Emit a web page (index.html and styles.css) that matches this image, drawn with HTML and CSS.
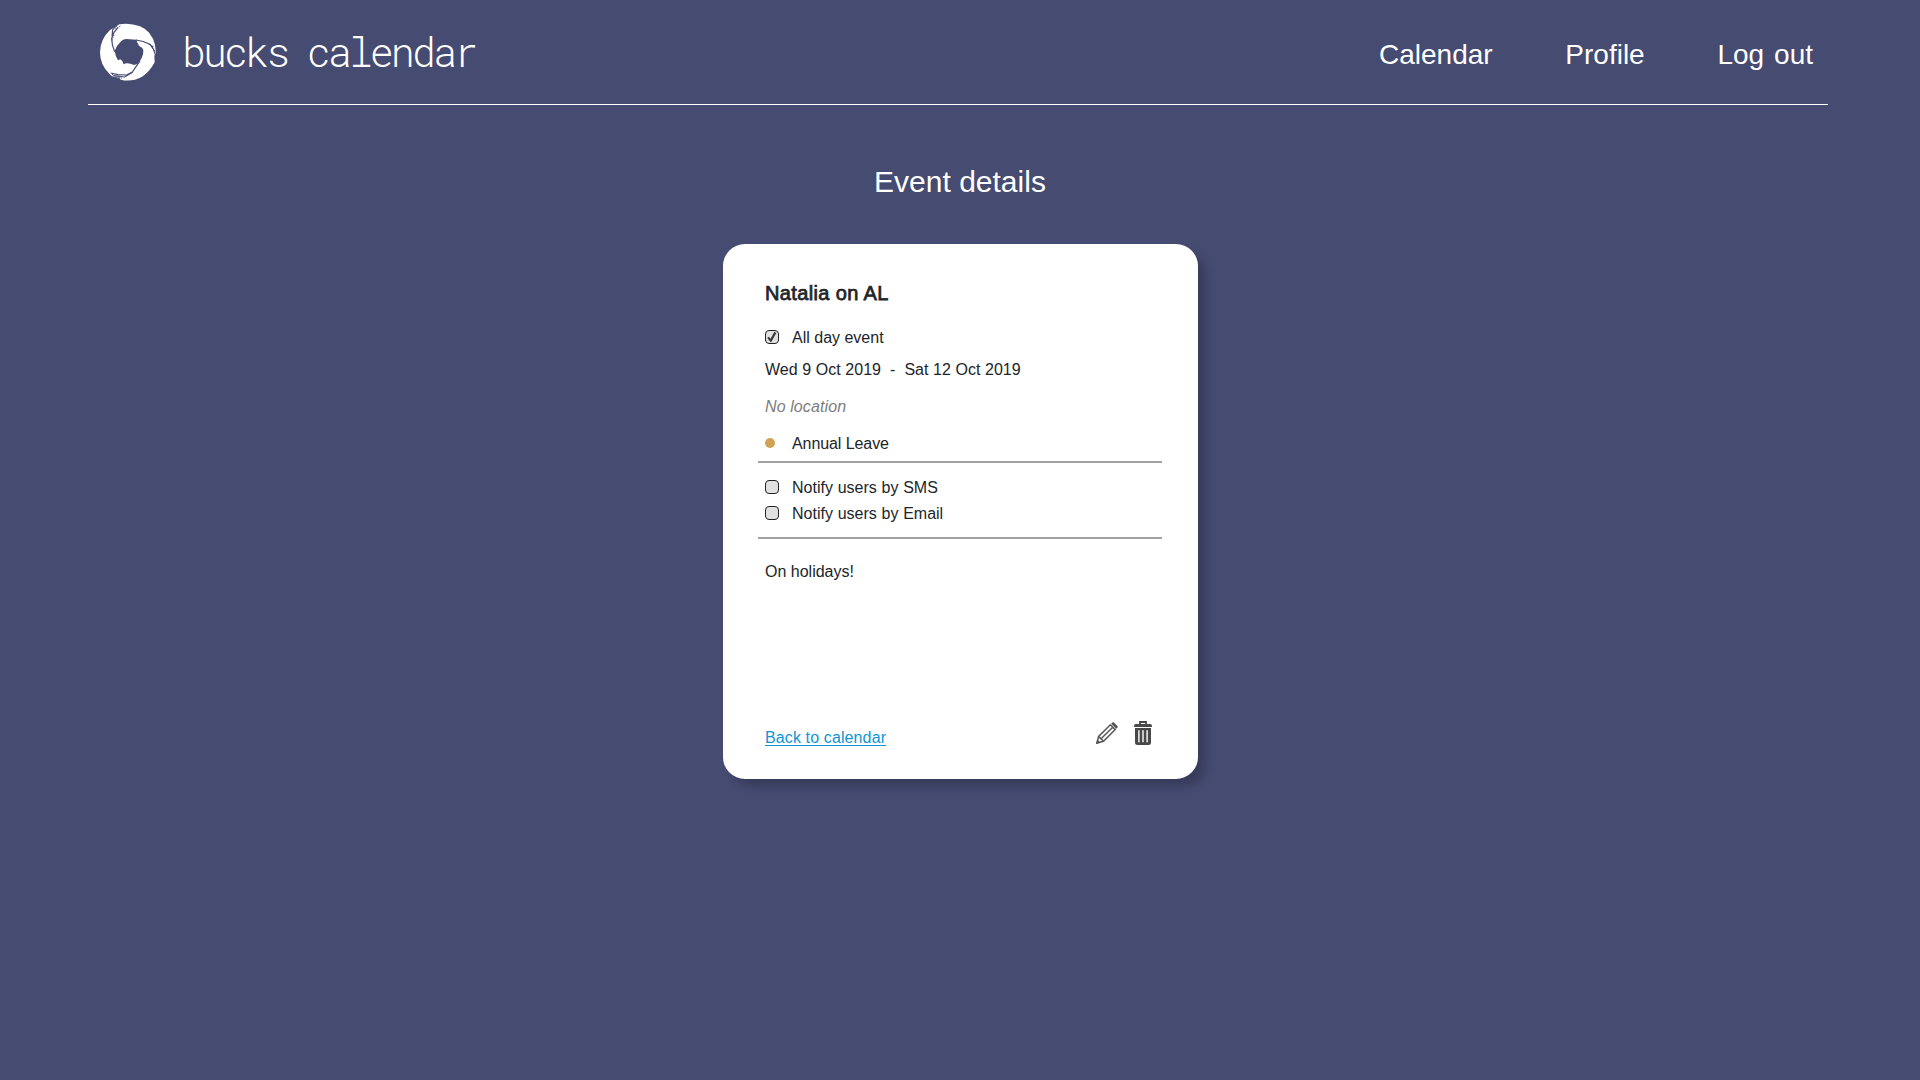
FILE: index.html
```html
<!DOCTYPE html>
<html lang="en">
<head>
<meta charset="utf-8">
<title>bucks calendar</title>
<link rel="stylesheet" href="styles.css">
</head>
<body>
<header class="header">
  <a class="brand">
    <svg class="brand-logo" viewBox="27 24 174 177" aria-hidden="true">
      <path fill="#fff" d="M88 28 Q120 23 150 34 Q185 48 195 90 L198 116 L193 122 L194 142 Q178 172 155 186 Q125 202 92 194 L88 188 L66 184 L58 176 Q30 150 30 112 Q31 72 60 45 L76 36Z"/>
      <path class="logo-gap" d="M74 108 Q80 90 92 80 Q98 73 108 72 L140 74 L141 80 L147 92 Q158 97 160 106 Q161 118 155 129 Q150 138 144 146 L132 150 Q120 144 108 145 L101 148 Q98 136 91 133 L84 136 Q76 124 74 108Z"/>
      <path class="logo-crack" d="M74 110 Q65 90 65 70 L72 52 L84 38 M66 64 L68 44 L80 32 M138 75 Q160 78 180 88 L190 102 L198 124 M172 84 L190 96 M150 138 L140 152 L128 170 L110 180 L84 179 L62 174 M128 172 L104 186 L70 182"/>
      <path class="logo-specks" d="M72 60 L64 80 M76 42 L92 32 M184 94 L198 112 M66 178 L96 190"/>
    </svg>
    <span class="brand-name">bucks calendar</span>
  </a>
  <nav class="nav">
    <a>Calendar</a>
    <a>Profile</a>
    <a>Log out</a>
  </nav>
</header>
<main class="main">
  <h1 class="page-title">Event details</h1>
  <section class="card">
    <h2 class="event-title">Natalia on AL</h2>
    <div class="row all-day">
      <span class="marker"><span class="checkbox"><svg viewBox="0 0 12 12"><path d="M2 6.4 L4.8 9.6 L9.4 1.4"/></svg></span></span>
      <span>All day event</span>
    </div>
    <div class="row dates">Wed 9 Oct 2019&nbsp; -&nbsp; Sat 12 Oct 2019</div>
    <div class="row location">No location</div>
    <div class="row category"><span class="marker"><span class="dot"></span></span><span>Annual Leave</span></div>
    <div class="notify">
      <div class="row"><span class="marker"><span class="checkbox"></span></span><span>Notify users by SMS</span></div>
      <div class="row"><span class="marker"><span class="checkbox"></span></span><span>Notify users by Email</span></div>
    </div>
    <p class="row description">On holidays!</p>
    <footer class="card-footer">
      <a class="back">Back to calendar</a>
      <div class="actions">
        <svg class="pencil" viewBox="0 0 22 22" aria-label="Edit">
          <path class="line" d="M1 21 L2.6 14.4 L14.4 2.8 L19.2 7.6 L7.5 19.3Z M2.6 14.4 L7.5 19.3 M5 16.8 L16.8 5.2"/>
          <path class="solid" d="M0 22 L1.2 17.4 L4.6 20.8Z M15.2 1.8 L16.4.6 Q17.2 0 18 .6 L21.4 4 Q22.2 4.8 21.5 5.6 L20.2 6.8Z"/>
        </svg>
        <svg class="trash" viewBox="0 0 18 24" aria-label="Delete">
          <path class="line" d="M6 3.5 V1 H12 V3.5"/>
          <path class="solid" fill-rule="evenodd" d="M1.5 3 H16.5 Q18 3.2 18 6 H0 Q0 3.2 1.5 3Z M1 7 H17 V21.5 Q17 24 14.5 24 H3.5 Q1 24 1 21.5Z M4.2 9.3 V21.3 H5.6 V9.3Z M8.3 9.3 V21.3 H9.7 V9.3Z M12.4 9.3 V21.3 H13.8 V9.3Z"/>
        </svg>
      </div>
    </footer>
  </section>
</main>
</body>
</html>
```
FILE: styles.css
```css
* { box-sizing: border-box; }

body {
  margin: 0;
  min-height: 100vh;
  background: #464b72;
  color: #212529;
  font: 16px/24px "Liberation Sans", Arial, sans-serif;
}

.header {
  display: flex;
  justify-content: space-between;
  height: 105px;
  margin: 0 92px 0 88px;
  padding: 23px 15px 0 11px;
  border-bottom: 1px solid #fff;
  color: #fff;
}

.brand { display: flex; gap: 25px; }
.brand-logo { width: 58px; height: 59px; }
.logo-gap { fill: #464b72; }
.logo-crack { fill: none; stroke: #464b72; stroke-width: 3.6; }
.logo-specks { fill: none; stroke: #464b72; stroke-width: 3; stroke-dasharray: 4 3; }

.brand-name {
  font: 300 40px/57px "Roboto Mono", "Liberation Mono", monospace;
  letter-spacing: -2.96px;
  word-spacing: -1.6px;
  white-space: pre;
}

.nav {
  display: flex;
  gap: 72.7px;
  font-size: 28px;
  line-height: 64px;
  word-spacing: 2.2px;
}

.main {
  display: flex;
  flex-direction: column;
  align-items: center;
}

.page-title {
  margin: 57px 0 42px;
  font-size: 30px;
  font-weight: 400;
  line-height: 40px;
  color: #fff;
}

.card {
  display: flex;
  flex-direction: column;
  width: 475px;
  height: 535px;
  padding: 35px 35.5px 27px;
  border-radius: 22px;
  background: #fff;
  box-shadow: 8px 8px 10px rgba(0, 0, 0, .2);
}

.event-title {
  margin: 0 0 16px;
  padding: 0 7px;
  font-size: 20px;
  font-weight: 400;
  line-height: 28px;
  letter-spacing: .37px;
  -webkit-text-stroke: .75px #212529;
}

.row {
  display: flex;
  align-items: center;
  height: 24px;
  padding: 0 7px;
}

.marker { display: flex; width: 27px; }

.checkbox {
  width: 14px;
  height: 14px;
  border: 1px solid #222;
  border-radius: 4px;
  background: #e1e1e1;
}
.checkbox svg { display: block; width: 12px; height: 12px; }
.checkbox path { fill: none; stroke: #3b3b3b; stroke-width: 2.2; }

.all-day { margin-top: 2px; }
.all-day > span:last-child,
.notify .row > span:last-child { padding-top: 1px; }
.notify .row { word-spacing: .3px; }
.dates { margin-top: 9px; letter-spacing: .05px; }
.location { margin-top: 13px; color: #7d7d7d; font-style: italic; letter-spacing: .1px; }
.category { margin-top: 13px; letter-spacing: -.08px; }
.dot { width: 10px; height: 10px; margin-top: -2px; border-radius: 50%; background: #cfa355; }

.notify {
  display: flex;
  flex-direction: column;
  gap: 2px;
  height: 78px;
  margin: 5px 0 21px;
  padding-top: 12px;
  border: solid #a2a2a2;
  border-width: 2px 0;
}

.description { margin: 0; }

.card-footer {
  display: flex;
  justify-content: space-between;
  align-items: flex-end;
  margin-top: auto;
  padding: 0 10.5px 0 7px;
}
.back {
  padding-bottom: 2px;
  color: #0f95d6;
  letter-spacing: .12px;
  text-decoration: underline;
  text-decoration-thickness: 1px;
  text-underline-offset: 2px;
}
.actions { display: flex; align-items: flex-start; gap: 16px; height: 31px; }
.pencil { width: 22px; height: 22px; margin-top: 1px; }
.trash { width: 18px; height: 24px; }
.actions .line { fill: none; stroke: #5c5c5c; stroke-width: 1.6; }
.actions .solid { fill: #555; }
.actions .trash .line { stroke: #484848; stroke-width: 1.8; }
.actions .trash .solid { fill: #484848; }
```
